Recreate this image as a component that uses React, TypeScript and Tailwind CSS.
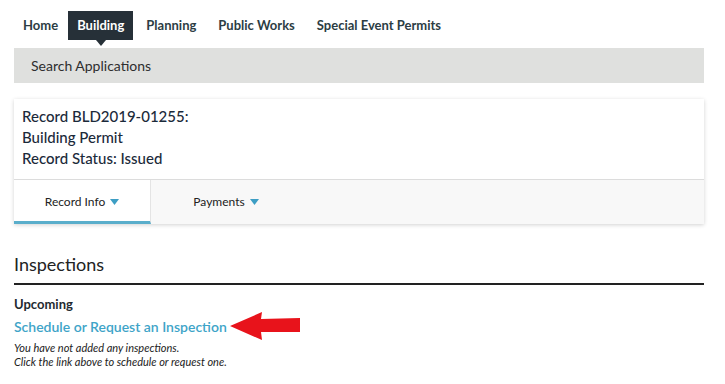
import React from 'react'

const navItems = ['Home', 'Building', 'Planning', 'Public Works', 'Special Event Permits']

function Caret() {
  return (
    <svg width="9" height="6" viewBox="0 0 9 6" className="inline-block ml-[5px] mb-[1px]">
      <path d="M0 0 L9 0 L4.5 6 Z" fill="#3d9ec4" />
    </svg>
  )
}

function RedArrow() {
  return (
    <svg width="72" height="28" viewBox="0 0 72 28" className="ml-[3px]">
      <path d="M0 14 L32 0 L31 7 L70 6 L70 20 L31 20 L32 28 Z" fill="#e8131b" />
    </svg>
  )
}

export default function App() {
  return (
    <div className="w-[725px] h-[384px] bg-white overflow-hidden font-['Lato',sans-serif] px-[14px]">
      {/* top nav */}
      <nav className="flex items-center h-[48px] pt-[3px]">
        {navItems.map((item, i) => {
          const active = item === 'Building'
          return (
            <div key={item} className="relative mr-[4px]">
              <div
                className={
                  'h-[29px] flex items-center text-[13px] font-bold ' +
                  (i === 0 ? 'pl-[9px] pr-[6px] ' : 'px-[9px] ') +
                  (active ? 'bg-[#263038] text-white' : 'text-[#2c3d44]')
                }
              >
                {item}
              </div>
              {active && (
                <div className="absolute left-1/2 -translate-x-1/2 top-[29px] w-0 h-0 border-l-[5px] border-r-[5px] border-t-[6px] border-l-transparent border-r-transparent border-t-[#263038]" />
              )}
            </div>
          )
        })}
      </nav>

      {/* search bar */}
      <div className="w-[690px] h-[35px] bg-[#dfe0de] flex items-center px-[17px] text-[14px] text-[#2e2e2e]">
        Search Applications
      </div>

      {/* record card */}
      <div className="w-[690px] mt-[16px] shadow-[0_1px_4px_rgba(0,0,0,0.18)]">
        <div className="bg-white px-[8px] pt-[7px] pb-[10px] text-[15px] leading-[21px] font-medium text-[#1b2a3a] border-b border-[#dcdcdc]">
          <div>Record BLD2019-01255:</div>
          <div>Building Permit</div>
          <div>Record Status: Issued</div>
        </div>
        <div className="flex h-[44px] bg-[#f8f8f8] text-[12px] text-[#222]">
          <div className="w-[137px] bg-white flex items-center justify-center border-b-[3px] border-[#5aaecb] pt-[3px] border-r border-r-[#e4e4e4]">
            Record Info
            <Caret />
          </div>
          <div className="w-[150px] flex items-center justify-center">
            Payments
            <Caret />
          </div>
        </div>
      </div>

      {/* inspections */}
      <div className="mt-[28px] text-[18px] text-[#222] leading-[24px]">Inspections</div>
      <div className="w-[690px] h-[2px] bg-[#222] mt-[7px]" />
      <div className="mt-[11px] text-[13px] font-bold text-[#1f2a30] leading-[16px]">Upcoming</div>
      <div className="flex items-center">
        <span className="text-[14px] font-semibold text-[#3ea4c8]">Schedule or Request an Inspection</span>
        <RedArrow />
      </div>
      <div className="mt-[1px] text-[11px] italic text-[#222] leading-[14px]">
        <div>You have not added any inspections.</div>
        <div>Click the link above to schedule or request one.</div>
      </div>
    </div>
  )
}
